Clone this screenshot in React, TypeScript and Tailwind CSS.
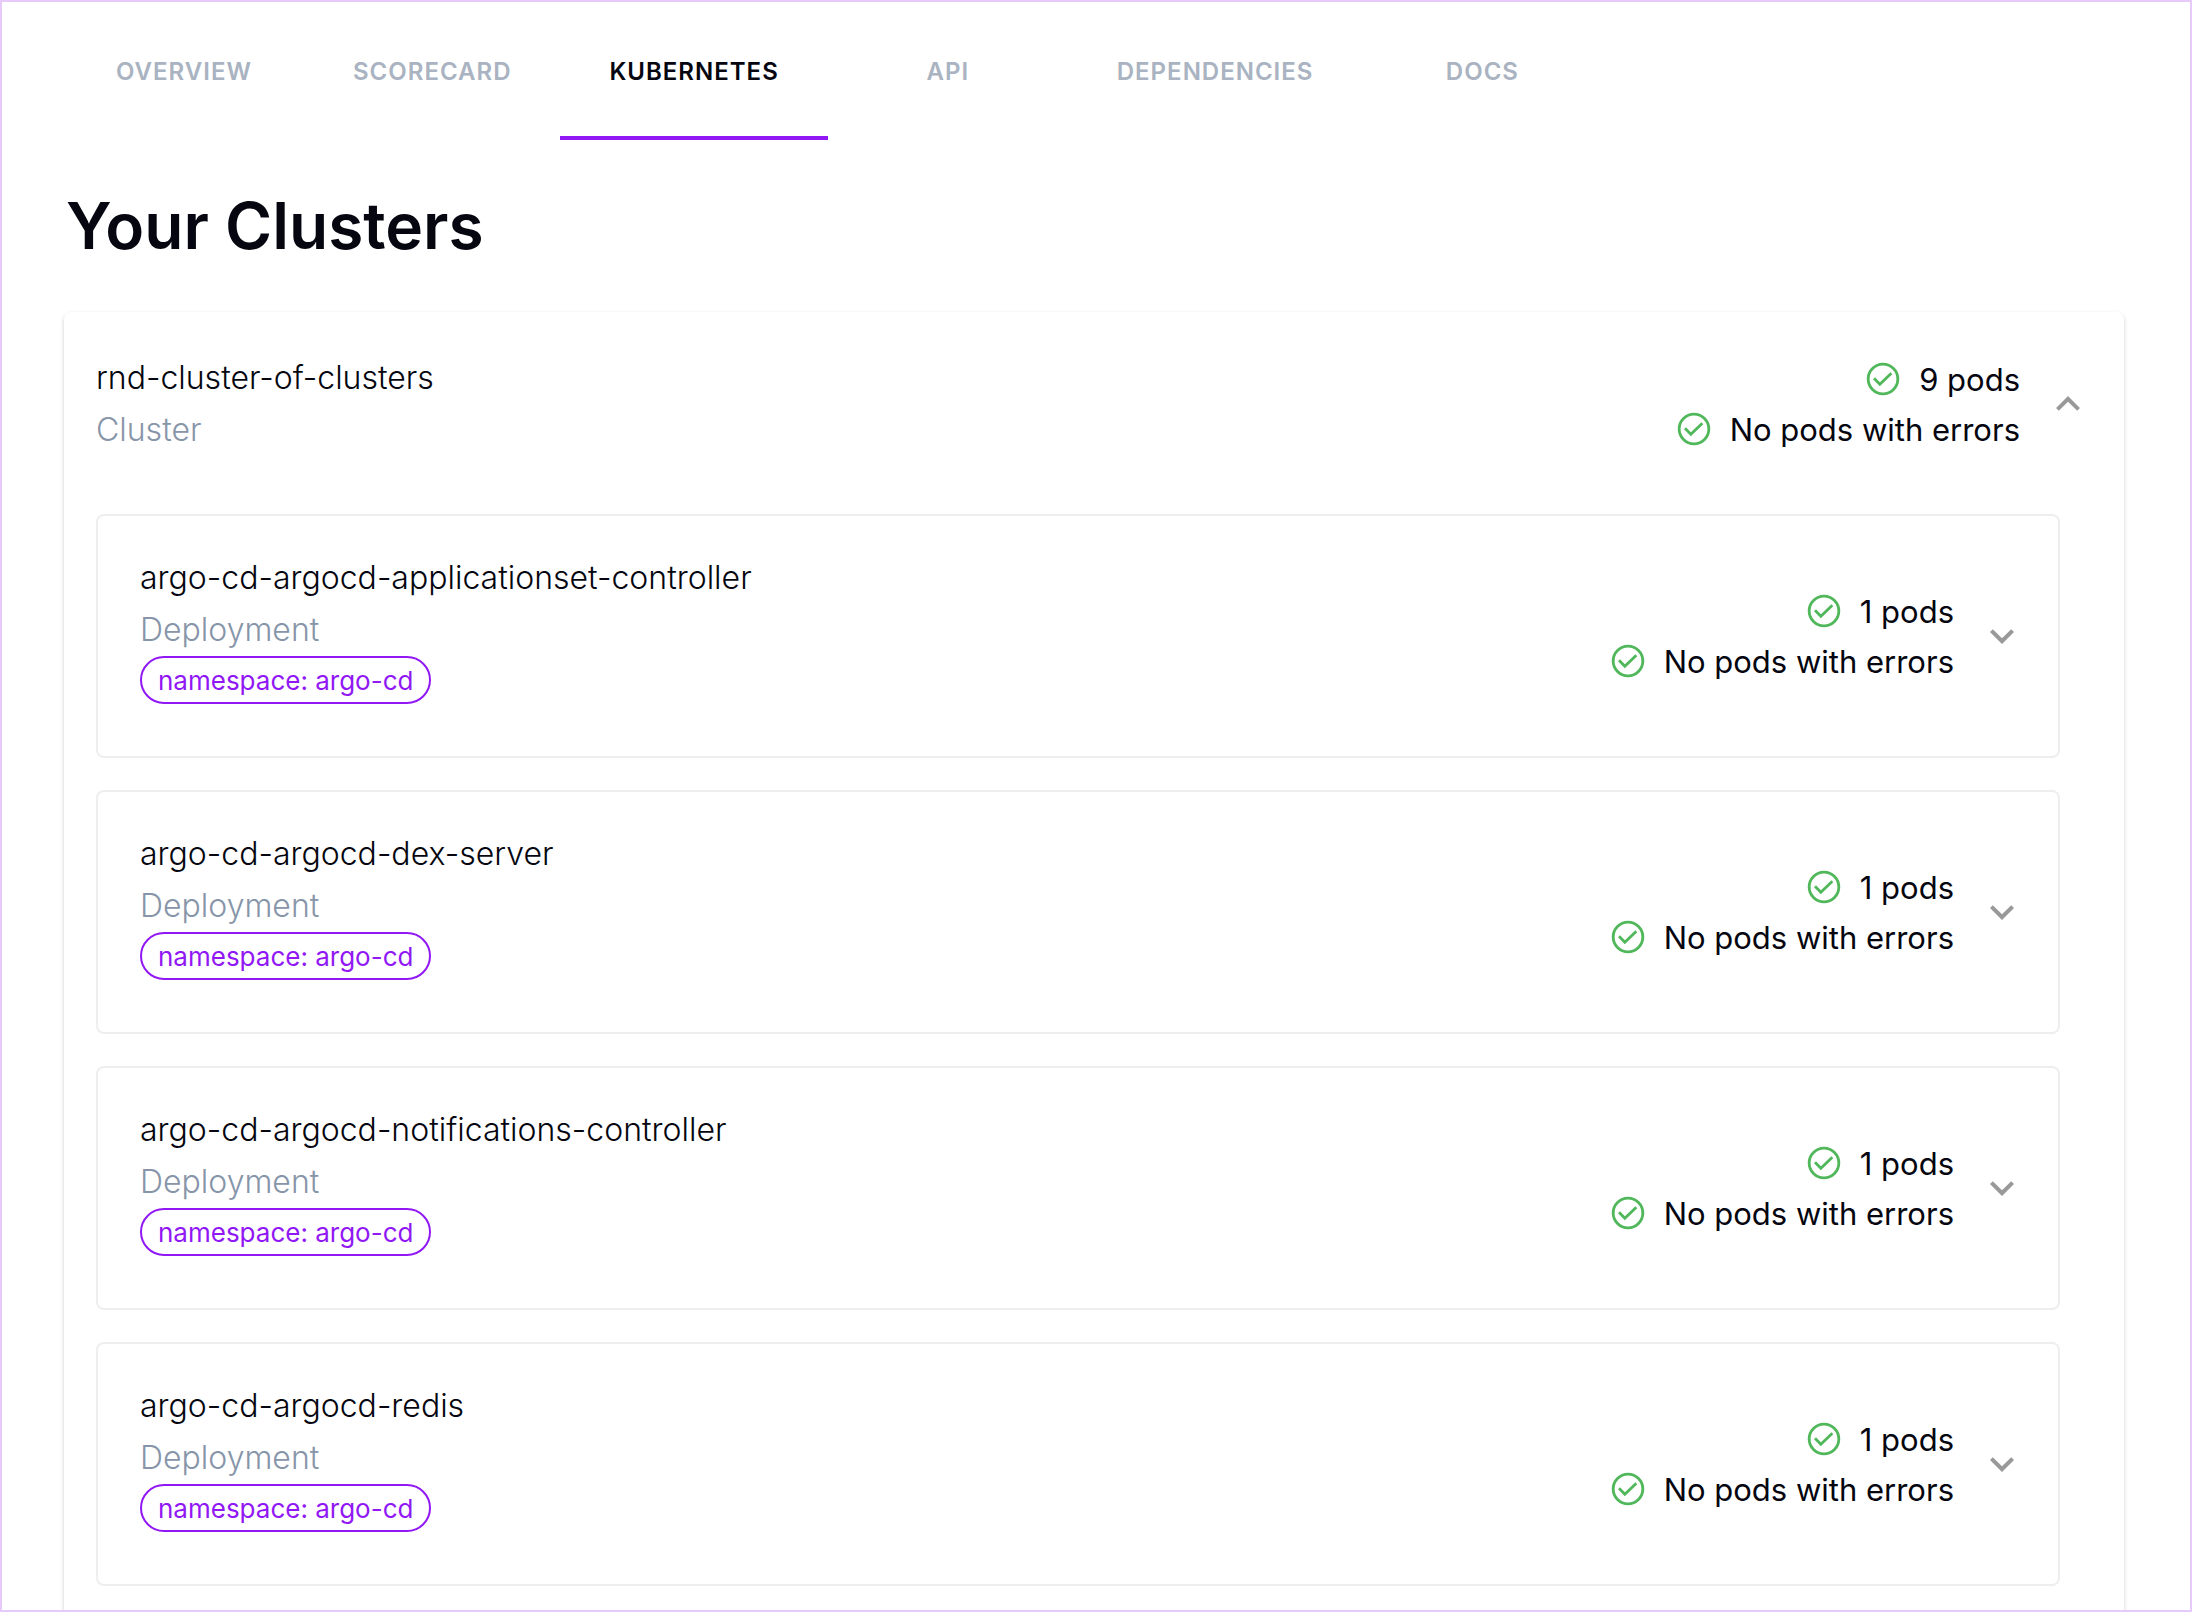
import React, { useState } from 'react';

const TABS = ['Overview', 'Scorecard', 'Kubernetes', 'API', 'Dependencies', 'Docs'];

const DEPLOYMENTS = [
  { name: 'argo-cd-argocd-applicationset-controller', namespace: 'argo-cd', pods: 1 },
  { name: 'argo-cd-argocd-dex-server', namespace: 'argo-cd', pods: 1 },
  { name: 'argo-cd-argocd-notifications-controller', namespace: 'argo-cd', pods: 1 },
  { name: 'argo-cd-argocd-redis', namespace: 'argo-cd', pods: 1 },
];

const CheckIcon: React.FC = () => (
  <svg
    viewBox="0 0 24 24"
    className="mb-0.5 size-10 shrink-0 fill-none stroke-[#51b75b]"
    strokeWidth="1.7"
    aria-hidden="true"
  >
    <circle cx="12" cy="12" r="8.9" />
    <path d="M6.6 11.6L10.1 15.1L17 8.6" />
  </svg>
);

const Chevron: React.FC<{ open?: boolean }> = ({ open }) => (
  <svg viewBox="0 0 24 24" className="size-12 shrink-0 fill-[#999999]" aria-hidden="true">
    {open ? (
      <path d="M12 8l-6 6 1.41 1.41L12 10.83l4.59 4.58L18 14z" />
    ) : (
      <path d="M16.59 8.59L12 13.17 7.41 8.59 6 10l6 6 6-6z" />
    )}
  </svg>
);

// Pod count and error state, right aligned
const PodStatus: React.FC<{ pods: number }> = ({ pods }) => (
  <div className="flex flex-col items-end pt-0.5 text-[31px] leading-[50px]">
    <div className="flex items-center gap-4">
      <CheckIcon />
      <span>{pods} pods</span>
    </div>
    <div className="flex items-center gap-4">
      <CheckIcon />
      <span>No pods with errors</span>
    </div>
  </div>
);

const DeploymentCard: React.FC<{ name: string; namespace: string; pods: number }> = ({
  name,
  namespace,
  pods,
}) => (
  <button
    type="button"
    aria-expanded="false"
    className="flex w-full items-center justify-between rounded-lg border-2 border-[#eeeeee] pr-8 pl-[42px] text-left"
  >
    <div className="flex flex-col items-start pt-9 pb-13">
      <div className="text-[32px] leading-[52px] font-light">{name}</div>
      <div className="text-[32px] leading-[52px] font-light text-[#8795a9]">Deployment</div>
      <span className="flex h-12 items-center rounded-full border-2 border-[#9118f5] px-4 text-[26px] text-[#9118f5]">
        namespace: {namespace}
      </span>
    </div>
    <div className="flex items-center gap-6">
      <PodStatus pods={pods} />
      <Chevron />
    </div>
  </button>
);

const App: React.FC = () => {
  const [activeTab, setActiveTab] = useState('Kubernetes');

  return (
    <div className="h-screen overflow-hidden border-2 border-[#e6cbfa] bg-white font-['Inter',sans-serif] text-[#05060f]">
      <nav role="tablist" className="flex px-[62px]">
        {TABS.map((tab) => (
          <button
            key={tab}
            type="button"
            role="tab"
            aria-selected={tab === activeTab}
            onClick={() => setActiveTab(tab)}
            className={`h-[138px] min-w-60 border-b-4 px-[49px] pt-1.5 text-2xl font-semibold tracking-[1px] uppercase ${
              tab === activeTab ? 'border-[#9118f5] text-[#05060f]' : 'border-transparent text-[#a9b3c1]'
            }`}
          >
            {tab}
          </button>
        ))}
      </nav>

      <main className="px-[62px]">
        <h1 className="mt-12 pl-0.5 text-[64px] leading-[76px] font-semibold">Your Clusters</h1>

        <section className="mt-12 mr-1 rounded-lg pr-8 pb-12 pl-8 shadow-[0_2px_4px_rgba(0,0,0,0.2)]">
          <button
            type="button"
            aria-expanded="true"
            className="flex w-full items-center justify-between pt-10 pb-[58px] text-left"
          >
            <div className="text-[32px] leading-[52px] font-light">
              <div>rnd-cluster-of-clusters</div>
              <div className="text-[#8795a9]">Cluster</div>
            </div>
            <div className="flex items-center gap-6">
              <PodStatus pods={9} />
              <Chevron open />
            </div>
          </button>

          <div className="flex flex-col gap-8 pr-8">
            {DEPLOYMENTS.map((d) => (
              <DeploymentCard key={d.name} {...d} />
            ))}
          </div>
        </section>
      </main>
    </div>
  );
};

export default App;
